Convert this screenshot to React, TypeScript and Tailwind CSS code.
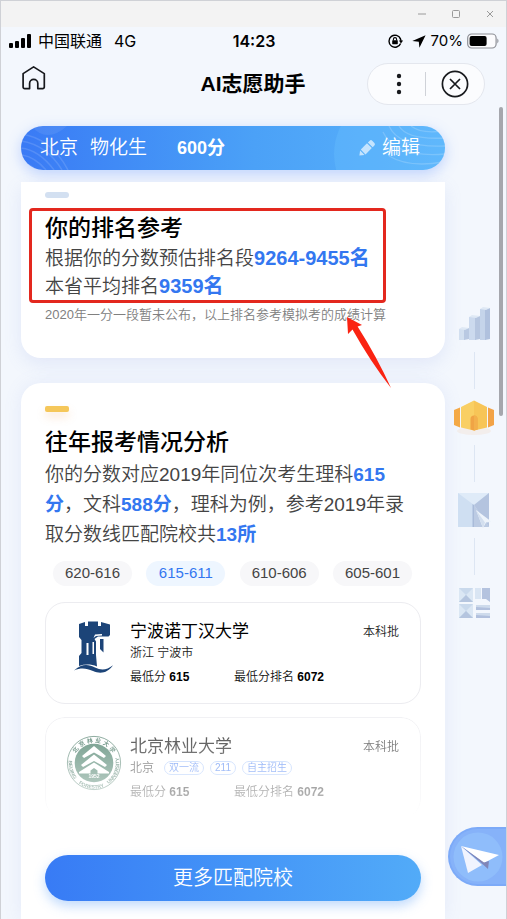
import type { ReactNode } from "react";

const ranges = ["620-616", "615-611", "610-606", "605-601"];

function SignalIcon() {
  return (
    <svg width="23" height="14" viewBox="0 0 23 14" aria-hidden="true">
      <rect x="0" y="9" width="4" height="5" rx="1" />
      <rect x="6" y="7" width="4" height="7" rx="1" />
      <rect x="12" y="4" width="4" height="10" rx="1" />
      <rect x="18" y="0" width="4" height="14" rx="1" />
    </svg>
  );
}

function TitleBar() {
  return (
    <div className="flex h-[26px] items-center justify-end gap-1 bg-[#f3f3f3] pr-px text-[#9a9a9a]">
      <button aria-label="最小化" className="flex h-6 w-[30px] items-center justify-center">
        <svg width="10" height="10" viewBox="0 0 10 10" stroke="currentColor" fill="none">
          <path d="M1 5h8" />
        </svg>
      </button>
      <button aria-label="最大化" className="flex h-6 w-[30px] items-center justify-center">
        <svg width="10" height="10" viewBox="0 0 10 10" stroke="currentColor" fill="none">
          <rect x="1.5" y="1.5" width="7" height="7" rx="1" />
        </svg>
      </button>
      <button aria-label="关闭" className="flex h-6 w-[30px] items-center justify-center">
        <svg width="10" height="10" viewBox="0 0 10 10" stroke="currentColor" fill="none">
          <path d="M2 2l6 6M8 2l-6 6" />
        </svg>
      </button>
    </div>
  );
}

function StatusBar() {
  return (
    <div className="grid h-7 grid-cols-3 items-center pl-2 pr-[7px] font-[Inter,'Noto_Sans_CJK_SC',sans-serif] text-base text-black">
      <div className="flex items-center gap-[6px]">
        <SignalIcon />
        <span>中国联通</span>
        <span className="ml-[6px] text-base">4G</span>
      </div>
      <span className="text-center font-semibold">14:23</span>
      <div className="flex items-center justify-end gap-1">
        <svg width="16" height="14" viewBox="0 0 16 14" fill="none" stroke="#000" strokeWidth="1.4" aria-hidden="true">
          <path d="M12.6 5A6 6 0 1 0 12.6 9.4" />
          <path d="M12 4.2A6 6 0 0 1 13 7.6" />
          <path d="M10.9 6.6h4.2L13 9.4z" fill="#000" stroke="none" />
          <rect x="4.2" y="6.2" width="5.6" height="4" rx=".6" fill="#000" stroke="none" />
          <path d="M5.4 6.4V5.2a1.6 1.6 0 0 1 3.2 0v1.2" strokeWidth="1.1" />
        </svg>
        <svg width="14" height="13" viewBox="0 0 14 13" className="ml-1" aria-hidden="true">
          <path d="M13.6 .2L.3 6l6.500.8.6 6z" />
        </svg>
        <span className="ml-px text-[15px]">70%</span>
        <svg width="32" height="16" viewBox="0 0 32 16" aria-hidden="true">
          <rect x=".7" y="1" width="28.4" height="14" rx="4" fill="#fbfbfd" stroke="#8d8f96" strokeWidth="1.2" />
          <rect x="2.6" y="3" width="17" height="10" rx="2" />
          <path d="M30.3 5.6c1.6.8 1.6 4 0 4.8z" fill="#8d8f96" />
        </svg>
      </div>
    </div>
  );
}

function NavBar() {
  return (
    <header className="grid h-[58px] grid-cols-[118px_1fr_118px] items-center pl-5 pr-[21px]">
      <button aria-label="首页" className="mb-3 w-7">
        <svg width="26" height="26" viewBox="0 0 26 26" fill="none" stroke="#16181c" strokeWidth="1.7" strokeLinejoin="round">
          <path d="M12.6 1.9L23.3 8.6V22a1.6 1.6 0 0 1-1.6 1.6h-4.9v-5.2a4 4 0 0 0-8.2 0v5.2H3.7A1.6 1.6 0 0 1 2.1 22V8.6z" />
        </svg>
      </button>
      <h1 className="text-center text-[21px] font-bold leading-7 text-black">AI志愿助手</h1>
      <div className="flex h-[42px] items-center rounded-full border border-[#e4e7ee] bg-[#fbfcfe]">
        <button aria-label="更多" className="flex w-[57px] justify-center pl-1">
          <svg width="6" height="22" viewBox="0 0 6 22" fill="#17191d">
            <circle cx="3" cy="3" r="2.2" />
            <circle cx="3" cy="11" r="2.2" />
            <circle cx="3" cy="19" r="2.2" />
          </svg>
        </button>
        <span className="h-6 w-px bg-[#cfd2d8]" />
        <button aria-label="关闭小程序" className="flex flex-1 justify-center">
          <svg width="28" height="28" viewBox="0 0 28 28" fill="none" stroke="#17191d" strokeWidth="1.7">
            <circle cx="14" cy="14" r="12.600" />
            <path d="M9 9l10 10M19 9L9 19" />
          </svg>
        </button>
      </div>
    </header>
  );
}

function ScoreBar() {
  return (
    <div className="relative flex h-11 items-center overflow-hidden rounded-full bg-linear-to-r from-[#3a7af5] via-[#4ba1f7] via-55% to-[#5ab3fb] pl-[19px] pr-[25px] text-[19px] text-white">
      <svg className="absolute left-0 top-0" width="70" height="44" viewBox="0 0 70 44" fill="none" stroke="#fff" strokeOpacity=".13" strokeWidth="1.5" aria-hidden="true">
        <path d="M0 22Q18 24 33 44M0 15Q26 19 41 44M1 29Q14 31 25 44M1 37Q9 38 15 44M0 8Q30 12 47 44" />
        <path d="M10 0Q26 18 46 0" fill="#fff" fillOpacity=".08" stroke="none" />
      </svg>
      <svg className="absolute right-0 top-0" width="112" height="44" viewBox="0 0 112 44" fill="none" stroke="#fff" strokeOpacity=".18" strokeWidth="1.3" aria-hidden="true">
        <circle cx="62" cy="28" r="61" fill="#6cc4ff" fillOpacity=".3" stroke="none" />
        <path d="M66 0Q74 14 112 12M78 0Q88 8 110 5M56 0Q66 22 112 20M50 6Q62 32 112 28M56 30Q76 42 110 36" />
      </svg>
      <span className="font-[350]">北京</span>
      <span className="ml-3 font-[350]">物化生</span>
      <span className="ml-[30px] text-lg font-bold">600分</span>
      <button className="relative ml-auto flex items-center gap-[6px] font-[350]">
        <svg width="18" height="18" viewBox="0 0 18 18" fill="#fff" fillOpacity=".65" aria-hidden="true">
          <path d="M1.400 16.600l.7-5 4.400 4.300z" />
          <path d="M2.800 10.500L9 4.300l4.800 4.800-6.300 6.300z" />
          <path d="M9.900 3.400l1.800-1.700a1.800 1.800 0 0 1 2.500 0l2.200 2.200a1.800 1.800 0 0 1 0 2.500l-1.700 1.800z" />
        </svg>
        编辑
      </button>
    </div>
  );
}

function Num({ children }: { children: ReactNode }) {
  return <strong className="font-bold leading-none text-[#3377f0]">{children}</strong>;
}

function RankCard() {
  return (
    <section className="relative rounded-b-[20px] bg-white px-6 pb-[33px] pt-[10px] shadow-[0_6px_18px_rgba(120,140,220,0.14)]">
      <div className="h-[6px] w-6 rounded-full bg-[#d3e0f1]" />
      <h2 className="mt-[15px] text-[23px] font-medium leading-[30px] text-black">你的排名参考</h2>
      <p className="mt-[2px] text-[19px] font-[350] leading-7 text-[#444] [&>strong]:text-xl [&>strong]:leading-none">
        根据你的分数预估排名段<Num>9264-9455名</Num>
        <br />
        本省平均排名<Num>9359名</Num>
      </p>
      <p className="mt-1 whitespace-nowrap text-[13px] font-[350] leading-5 text-[#808080]">
        2020年一分一段暂未公布，以上排名参考模拟考的成绩计算
      </p>

      {/* callout box and arrow */}
      <div className="absolute left-2 top-[26px] h-[95px] w-[357px] rounded-[4px] border-3 border-[#e3281e]" />
      <svg className="absolute left-[325px] top-[134px] z-10" width="46" height="74" viewBox="0 0 46 74" aria-hidden="true">
        <path d="M1 1l15 8-4.400 1.500Q31 41 45 72Q24 45 6.500 13.500L2 18z" fill="#fa2312" />
      </svg>
    </section>
  );
}

function CastleLogo() {
  return (
    <svg width="54" height="56" viewBox="0 0 54 56" fill="#1c4478" aria-hidden="true">
      <path d="M12 4l6-2v4h3V1.500h10V6h3V2l9 2.500V15l-1.500 1.500H31L27.500 19l1.500 2.500V35l1 11.500c-6-2.500-12-2.500-18-.5V36l2.500-3V20L12 17z" />
      <path d="M33 19h3.500v13.500L33 29z" />
      <path d="M19.500 23h2v12h-2zM25.500 22h1.500v12h-1.500z" fill="#fff" />
      <path d="M28 14.500l7-.500v1.500l-6 .5-2.500 2z" fill="#fff" />
      <path d="M7 50.500c8-7.500 15-6 21-3 6.500 3.200 12 2.500 18-2.300C41 52.500 34 54.500 26 51c-7-3-12-3.500-19-.5z" />
    </svg>
  );
}

function ForestrySeal() {
  return (
    <svg width="56" height="56" viewBox="0 0 56 56" aria-hidden="true">
      <defs>
        <path id="seal-top" d="M7.500 28a20.500 20.500 0 0 1 41 0" />
        <path id="seal-bottom" d="M4.500 19a25.300 25.300 0 1 0 47 0" />
      </defs>
      <circle cx="28" cy="28" r="26.600" fill="#fff" stroke="#1f5a43" strokeWidth=".8" />
      <circle cx="28" cy="28" r="19.300" fill="#2b6a50" />
      <path d="M28 11l12 10-2 2-10-5.500L18 23l-2-2zM28 19.500L41 30l-2 2-11-6-11 6-2-2zM28 27.500L43 37v1.500H31.500v-3L28 33l-3.500 2.500v3H13V37z" fill="#fff" />
      <text fontSize="6" fontWeight="700" fill="#1f5a43">
        <textPath href="#seal-top" startOffset="50%" textAnchor="middle">北 京 林 业 大 学</textPath>
      </text>
      <g fontSize="5" fontWeight="700" fill="#1f5a43" textAnchor="middle">
        <text>
          <textPath href="#seal-bottom" startOffset="17%">BEIJING</textPath>
        </text>
        <text>
          <textPath href="#seal-bottom" startOffset="47%">FORESTRY</textPath>
        </text>
        <text>
          <textPath href="#seal-bottom" startOffset="81%">UNIVERSITY</textPath>
        </text>
      </g>
      <text x="28" y="43" fontSize="5" fontWeight="700" fill="#fff" textAnchor="middle">1952</text>
    </svg>
  );
}

type School = {
  name: string;
  place: string;
  tags: string[];
  logo: ReactNode;
  faded?: boolean;
};

const schools: School[] = [
  { name: "宁波诺丁汉大学", place: "浙江 宁波市", tags: [], logo: <CastleLogo /> },
  {
    name: "北京林业大学",
    place: "北京",
    tags: ["双一流", "211", "自主招生"],
    logo: <ForestrySeal />,
    faded: true,
  },
];

function SchoolCard({ name, place, tags, logo, faded }: School) {
  return (
    <li
      className={`flex rounded-[20px] border border-[#ececf0] pb-[18px] pl-5 pr-[21px] pt-4 text-xs ${
        faded ? "mask-[linear-gradient(to_bottom,rgba(0,0,0,0.75),rgba(0,0,0,0.28)_82%,transparent_96%)]" : ""
      }`}
    >
      <div className="mr-2 flex w-14 items-center justify-center pb-2">{logo}</div>
      <div className="flex-1">
        <div className="flex items-center justify-between">
          <h3 className="text-[17px] leading-[26px] text-black">{name}</h3>
          <span className="font-[350] text-[#222]">本科批</span>
        </div>
        <div className="flex h-4 items-center gap-[6px] font-[350] text-[#222]">
          <span className={tags.length ? "mr-1" : ""}>{place}</span>
          {tags.map((tag) => (
            <span key={tag} className="rounded-full border border-[#a9c6fb] px-1 text-[10px] leading-3 text-[#2f6cf0]">
              {tag}
            </span>
          ))}
        </div>
        <div className="mt-2 flex leading-4 font-[350] text-[#111]">
          <span className="w-[104px]">
            最低分 <b className="font-bold text-black">615</b>
          </span>
          <span>
            最低分排名 <b className="font-bold text-black">6072</b>
          </span>
        </div>
      </div>
    </li>
  );
}

function AnalysisCard() {
  return (
    <section className="mt-[25px] flex-1 rounded-t-[20px] bg-white px-6 pb-[18px] pt-[23px] shadow-[0_0_18px_rgba(120,140,220,0.12)]">
      <div className="h-[6px] w-6 rounded-[2px] bg-[#f5c75a] shadow-[0_5px_8px_rgba(245,160,90,0.25)]" />
      <h2 className="mt-[15px] text-[23px] font-medium leading-[30px] text-black">往年报考情况分析</h2>
      <p className="mt-[3px] text-[19px] font-[350] leading-[30px] text-[#444]">
        你的分数对应2019年同位次考生理科<Num>615</Num>
        <br />
        <Num>分</Num>，文科<Num>588分</Num>，理科为例，参考2019年录
        <br />
        取分数线匹配院校共<Num>13所</Num>
      </p>
      <div className="mt-[11px] flex justify-between pl-2 pr-[9px]">
        {ranges.map((range, i) => (
          <button
            key={range}
            aria-pressed={i === 1}
            className={`h-[25px] w-[79px] rounded-full text-[15px] ${
              i === 1 ? "bg-[#eef6ff] text-[#3377f0]" : "bg-[#f7f7f9] text-[#444]"
            }`}
          >
            {range}
          </button>
        ))}
      </div>
      <ul className="mt-4 flex flex-col gap-[13px]">
        {schools.map((school) => (
          <SchoolCard key={school.name} {...school} />
        ))}
      </ul>
      <button className="mt-9 h-[46px] w-full rounded-full bg-linear-to-r from-[#387bf5] to-[#52abf8] text-xl font-[350] text-white shadow-[0_5px_12px_rgba(74,150,247,0.35)]">
        更多匹配院校
      </button>
    </section>
  );
}

function BarsIcon() {
  return (
    <svg width="34" height="36" viewBox="0 0 34 36" aria-hidden="true">
      <path d="M2 23l6-1v12H2z" fill="#d3e0f0" />
      <path d="M7 23l5-1v11l-5 1z" fill="#b9c9e2" />
      <path d="M12 11h7v23h-7z" fill="#ccdaee" />
      <path d="M18 11l5-1v23l-5 1z" fill="#b6c6e0" />
      <path d="M23 3h6v31h-6z" fill="#c5d4ea" />
      <path d="M28 3l5-1v31l-5 1z" fill="#b0c1de" />
      <path d="M2 23l3-2 7 1-4 2zM12 11l3-2 8 1-4 2zM23 3l3-2 7 1-4 2z" fill="#dfe9f5" />
    </svg>
  );
}

function SchoolIcon() {
  return (
    <svg width="40" height="40" viewBox="0 0 40 40" aria-hidden="true">
      <ellipse cx="20" cy="34" rx="17" ry="4" fill="#f7b070" opacity=".12" />
      <path d="M0 13l6-2.500v20L0 28z" fill="#f4a946" />
      <path d="M7 10l13-6.500v30L7 30.500z" fill="#f9cf63" />
      <path d="M20 3.500L33 10v20.500l-13 3z" fill="#f7c557" />
      <path d="M34 10.500l6 2.500v15l-6 2.500z" fill="#f2a347" />
      <path d="M16.500 32.500V22a3.500 3.500 0 0 1 7 0v10.500l-3.500 1z" fill="#f0a445" />
      <path d="M20 18.500a3.500 3.500 0 0 1 3.500 3.500v10.500l-3.500 1z" fill="#f3b04c" />
    </svg>
  );
}

function MailIcon() {
  return (
    <svg width="34" height="36" viewBox="0 0 34 36" aria-hidden="true">
      <path d="M1 1h31v34H1z" fill="#cfdff2" />
      <path d="M1 1h31L17 13z" fill="#dfebf8" />
      <path d="M32 1v34L17 13z" fill="#b4c4df" />
      <path d="M17 13v22h15z" fill="#bccbe3" />
      <path d="M17 13v22h-1.500V12z" fill="#a9bbd9" />
      <path d="M19 18l16 12-6 .5L26 36z" fill="#eef4fb" />
      <path d="M19 18l9 12.500L26 36z" fill="#d3dfef" />
    </svg>
  );
}

function GridIcon() {
  return (
    <svg width="34" height="34" viewBox="0 0 34 34" aria-hidden="true">
      <path d="M2 2h14v14H2zM2 18h14v14H2z" fill="#c9d9ec" />
      <path d="M2 2l7 7 7-7v14l-7-7-7 7zM2 18l7 7 7-7v14l-7-7-7 7z" fill="#dbe7f4" />
      <path d="M9 9l7 7H2zM9 25l7 7H2z" fill="#b5c5df" />
      <path d="M18 2h6v11h-6z" fill="#d9e5f3" />
      <path d="M25 2h8v14l-4-3h-4z" fill="#b4c3df" />
      <path d="M19 19h14v5H19zM19 27h14v5H19z" fill="#cedbec" />
      <path d="M19 21l14 1v2H19zM19 29l14 1v2H19z" fill="#b1c0dd" />
    </svg>
  );
}

const sections = [
  { label: "排名参考", icon: <BarsIcon /> },
  { label: "报考情况", icon: <SchoolIcon /> },
  { label: "志愿填报", icon: <MailIcon /> },
  { label: "更多工具", icon: <GridIcon /> },
];

function SideRail() {
  return (
    <nav className="flex w-[61px] flex-col items-center pr-[3px] pt-[178px]">
      {sections.map(({ label, icon }, i) => (
        <div key={label} className="flex flex-col items-center">
          {i > 0 && <span className="my-2 h-[37px] w-px bg-[#dde6f3]" />}
          <button aria-label={label} className="flex size-10 items-center justify-center">
            {icon}
          </button>
        </div>
      ))}
    </nav>
  );
}

function SendButton() {
  return (
    <button
      aria-label="发送"
      className="fixed bottom-[33px] right-px flex h-[59px] w-[58px] items-center rounded-l-full border-2 border-r-0 border-[#7caaf8] bg-[#86b2f9] pl-[3px]"
    >
      <svg width="50" height="50" viewBox="0 0 50 50" aria-hidden="true">
        <circle cx="25" cy="25" r="24.500" fill="#8fbdfb" />
        <path d="M8 14L46 23 31 31z" fill="#fff" />
        <path d="M8 14L15 41 29 33z" fill="#f1f4fe" />
        <path d="M8 14L31 30.500 36 29 35 37 30 32.500z" fill="#8086b8" />
      </svg>
    </button>
  );
}

export default function App() {
  return (
    <div className="relative flex min-h-screen flex-col border-x border-t border-[#cfd1d6] bg-[#f3f7fd] font-['Liberation_Sans','Noto_Sans_CJK_SC',sans-serif]">
      <TitleBar />
      <StatusBar />
      <NavBar />
      <div className="flex flex-1 pt-[13px]">
        <main className="ml-5 flex flex-1 flex-col">
          <div className="rounded-full shadow-[0_4px_14px_rgba(90,140,255,0.35)]">
            <ScoreBar />
          </div>
          <div className="mt-3 flex flex-1 flex-col">
            <RankCard />
            <AnalysisCard />
          </div>
        </main>
        <SideRail />
      </div>
      <div className="absolute right-[3px] top-[106px] h-[309px] w-1 rounded-full bg-[#a5a7ad]" />
      <SendButton />
    </div>
  );
}
